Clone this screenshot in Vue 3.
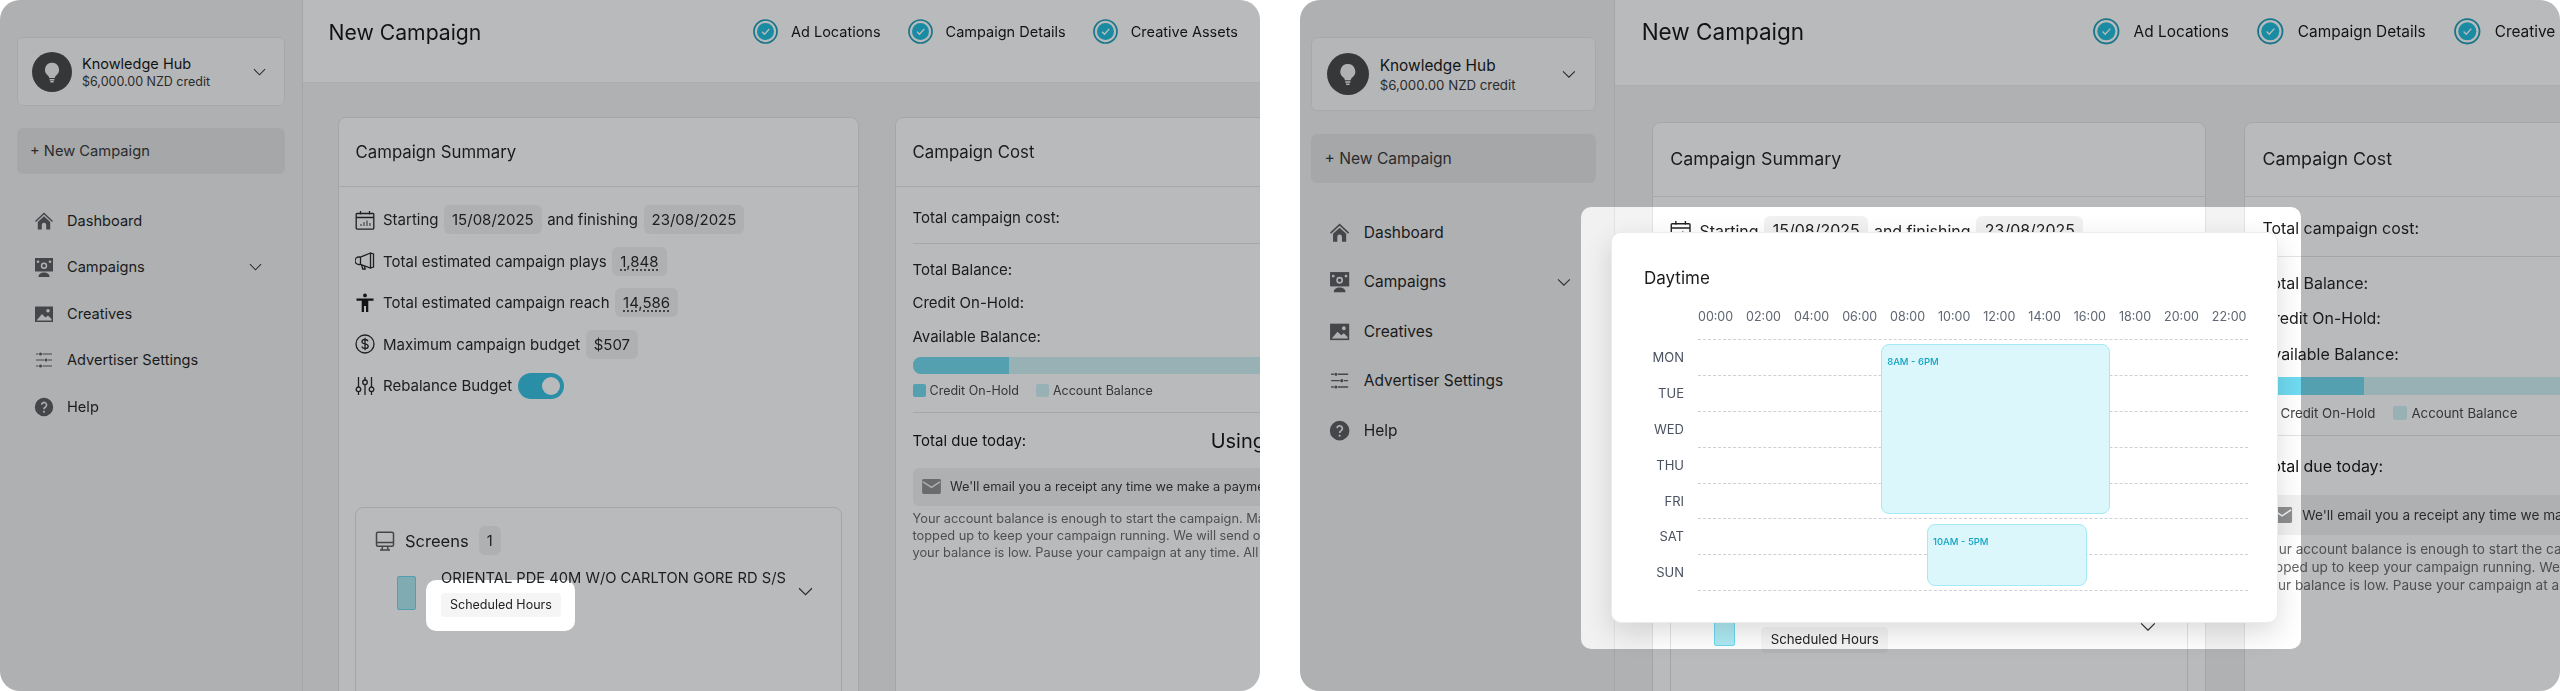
<template>
  <div class="page">
    <section v-for="shot in shots" :key="shot.name" class="shot" :class="shot.name">
      <div class="app">
        <aside class="sidebar">
          <div class="account">
            <span class="avatar">
              <svg viewBox="0 0 24 24" width="26" height="26">
                <path d="M12 3.5a6.5 6.5 0 0 0-3.6 11.9c.7.5 1 1.2 1 2.1h5.2c0-.9.3-1.6 1-2.1A6.500 6.500 0 0 0 12 3.500z" fill="#f2f2f2" />
                <path d="M9.800 19.200h4.400M10.500 21h3" stroke="#f2f2f2" stroke-width="1.300" fill="none" />
              </svg>
            </span>
            <div class="account-text">
              <div class="account-name">Knowledge Hub</div>
              <div class="account-credit">$6,000.00 NZD credit</div>
            </div>
            <svg class="chev" viewBox="0 0 14 8" width="13" height="8"><path d="M1 1l6 6 6-6" /></svg>
          </div>
          <button class="new-btn">+ New Campaign</button>
          <nav class="nav">
            <div v-for="item in nav" :key="item.label" class="nav-item">
              <svg class="icon" viewBox="0 0 20 20" width="20" height="20">
                <path v-for="(p, i) in icons[item.icon]" :key="i" :d="p.d" :class="p.k" />
              </svg>
              <span>{{ item.label }}</span>
              <svg v-if="item.open" class="chev nav-chev" viewBox="0 0 14 8" width="13" height="8"><path d="M1 1l6 6 6-6" /></svg>
            </div>
          </nav>
        </aside>

        <main class="main">
          <header class="topbar">
            <h1>New Campaign</h1>
            <div class="steps">
              <div v-for="step in steps" :key="step" class="step">
                <svg viewBox="0 0 25 25" width="25" height="25">
                  <circle cx="12.500" cy="12.500" r="11.500" class="ring" />
                  <circle cx="12.500" cy="12.500" r="8.500" class="dot" />
                  <path d="M9 12.800l2.500 2.500 4.800-5.300" class="tick" />
                </svg>
                <span>{{ step }}</span>
              </div>
            </div>
          </header>

          <div class="columns">
            <div class="card">
              <div class="card-head">Campaign Summary</div>
              <div class="summary">
                <div class="row">
                  <svg class="icon row-icon" viewBox="0 0 20 20" width="20" height="20">
                    <path v-for="(p, i) in icons.calendar" :key="i" :d="p.d" :class="p.k" />
                  </svg>
                  <span>Starting</span><span class="chip">15/08/2025</span><span>and finishing</span><span class="chip">23/08/2025</span>
                </div>
                <div class="row">
                  <svg class="icon row-icon" viewBox="0 0 20 20" width="20" height="20">
                    <path v-for="(p, i) in icons.megaphone" :key="i" :d="p.d" :class="p.k" />
                  </svg>
                  <span>Total estimated campaign plays</span><span class="chip"><u>1,848</u></span>
                </div>
                <div class="row">
                  <svg class="icon row-icon" viewBox="0 0 20 20" width="20" height="20">
                    <path v-for="(p, i) in icons.person" :key="i" :d="p.d" :class="p.k" />
                  </svg>
                  <span>Total estimated campaign reach</span><span class="chip"><u>14,586</u></span>
                </div>
                <div class="row">
                  <svg class="icon row-icon" viewBox="0 0 20 20" width="20" height="20">
                    <path v-for="(p, i) in icons.dollar" :key="i" :d="p.d" :class="p.k" />
                  </svg>
                  <span>Maximum campaign budget</span><span class="chip">$507</span>
                </div>
                <div class="row">
                  <svg class="icon row-icon" viewBox="0 0 20 20" width="20" height="20">
                    <path v-for="(p, i) in icons.tune" :key="i" :d="p.d" :class="p.k" />
                  </svg>
                  <span>Rebalance Budget</span><span class="toggle"><i></i></span>
                </div>

                <div class="screens">
                  <div class="screens-head">
                    <svg class="icon" viewBox="0 0 20 20" width="20" height="20">
                      <path v-for="(p, i) in icons.monitor" :key="i" :d="p.d" :class="p.k" />
                    </svg>
                    <span class="screens-title">Screens</span>
                    <span class="chip">1</span>
                  </div>
                  <div class="screen">
                    <span class="thumb"></span>
                    <div class="screen-text">
                      <div class="screen-name">ORIENTAL PDE 40M W/O CARLTON GORE RD S/S</div>
                      <span class="hours-chip">Scheduled Hours</span>
                    </div>
                    <svg class="chev screen-chev" viewBox="0 0 14 8" width="15" height="9"><path d="M1 1l6 6 6-6" /></svg>
                  </div>
                </div>
              </div>
            </div>

            <div class="card">
              <div class="card-head">Campaign Cost</div>
              <div class="cost">
                <div class="cost-row">Total campaign cost:</div>
                <hr class="first-rule" />
                <div class="cost-row">Total Balance:</div>
                <div class="cost-row spaced">Credit On-Hold:</div>
                <div class="cost-row spaced">Available Balance:</div>
                <div class="bar"><span class="bar-hold" style="width: 18%"></span></div>
                <div class="legend">
                  <span class="swatch hold"></span><span>Credit On-Hold</span>
                  <span class="swatch bal"></span><span>Account Balance</span>
                </div>
                <hr class="second-rule" />
                <div class="due">
                  <span>Total due today:</span>
                  <span class="using">Using account balance</span>
                </div>
                <div class="notice">
                  <svg viewBox="0 0 20 16" width="19" height="15">
                    <rect width="20" height="16" rx="1.500" fill="#8d8e90" />
                    <path d="M1 3l9 6 9-6" fill="none" stroke="#f2f2f2" stroke-width="1.500" />
                  </svg>
                  <span>We'll email you a receipt any time we make a payment from your account balance.</span>
                </div>
                <p class="fine">
                  Your account balance is enough to start the campaign. Make sure your account is<br />
                  topped up to keep your campaign running. We will send out a notification when<br />
                  your balance is low. Pause your campaign at any time. All payments are secure.
                </p>
              </div>
            </div>
          </div>
        </main>
      </div>

      <div class="spot"></div>

      <div v-if="shot.modal" class="modal">
        <h2>Daytime</h2>
        <div class="schedule">
          <div class="hours">
            <span v-for="h in hours" :key="h">{{ h }}</span>
          </div>
          <div class="days">
            <span v-for="d in days" :key="d">{{ d }}</span>
          </div>
          <div class="track">
            <div v-for="d in days" :key="d" class="track-row"></div>
            <div v-for="b in blocks" :key="b.label" class="block" :style="blockStyle(b)">{{ b.label }}</div>
          </div>
        </div>
      </div>
    </section>
  </div>
</template>

<script setup>
const shots = [
  { name: 'shot-a', modal: false },
  { name: 'shot-b', modal: true },
];

const steps = ['Ad Locations', 'Campaign Details', 'Creative Assets'];

const nav = [
  { label: 'Dashboard', icon: 'home' },
  { label: 'Campaigns', icon: 'billboard', open: true },
  { label: 'Creatives', icon: 'image' },
  { label: 'Advertiser Settings', icon: 'sliders' },
  { label: 'Help', icon: 'help' },
];

const icons = {
  home: [
    { k: 'line', d: 'M1.500 10.500 10 2.500l8.500 8' },
    { k: 'solid', d: 'M3.800 11 10 5.300l6.200 5.700v7.500h-4V14a2.200 2.200 0 0 0-4.400 0v4.500h-4z' },
  ],
  billboard: [
    { k: 'solid', d: 'M1 1h18v13.500H1z' },
    { k: 'cut', d: 'M10 5.500a3.200 3.200 0 1 1 0 6.400 3.200 3.200 0 0 1 0-6.400zM4 3.500a1.300 1.300 0 1 1 0 2.600 1.300 1.300 0 0 1 0-2.600zM16 3.500a1.300 1.300 0 1 1 0 2.600 1.300 1.300 0 0 1 0-2.600z' },
    { k: 'solid', d: 'M10 7a1.700 1.700 0 1 1 0 3.400A1.700 1.700 0 0 1 10 7z' },
    { k: 'solid', d: 'M4.500 20c0-3 2.200-4.500 5.500-4.500s5.500 1.500 5.500 4.500z' },
  ],
  image: [
    { k: 'solid', d: 'M1 2.500h18v15.500H1z' },
    { k: 'cut', d: 'M2.500 16.500 8 10l3.500 3.500 2.500-2 3.500 3.500v1.500zM14 5a1.800 1.800 0 1 1 0 3.600A1.800 1.800 0 0 1 14 5z' },
  ],
  sliders: [
    { k: 'thin', d: 'M2 4h2.500M8.500 4H18M2 10h8M14 10h4M2 16h2.500M8.500 16H18' },
    { k: 'solid', d: 'M6.500 2.500a1.500 1.500 0 1 1 0 3 1.500 1.500 0 0 1 0-3zM12 8.500a1.500 1.500 0 1 1 0 3 1.500 1.500 0 0 1 0-3zM6.500 14.500a1.500 1.500 0 1 1 0 3 1.500 1.500 0 0 1 0-3z' },
  ],
  help: [
    { k: 'solid', d: 'M10 .8a9.200 9.200 0 1 1 0 18.400A9.200 9.200 0 0 1 10 .8z' },
    { k: 'cutline', d: 'M7.600 7.600A2.500 2.500 0 1 1 11.500 10c-1 .6-1.500 1.100-1.500 2.200' },
    { k: 'cut', d: 'M10 13.800a1 1 0 1 1 0 2 1 1 0 0 1 0-2z' },
  ],
  calendar: [
    { k: 'dark', d: 'M2 3.500h16a.8.8 0 0 1 .8.8v14a.8.8 0 0 1-.8.8H2a.8.8 0 0 1-.8-.8v-14a.8.8 0 0 1 .8-.8zM1.500 7.500h17M5.500 1v3.500M14.500 1v3.500' },
    { k: 'thin', d: 'M6 16v-2M9 16v-4M12 16v-5.500M15 16v-3' },
  ],
  megaphone: [
    { k: 'dark', d: 'M15.500 2 5.500 6H3.800a2.800 2.800 0 0 0 0 7.500h1.700l10 3.500zM15.500 2l3 1v13l-3 1M5.500 6v7.500M6.500 13.800l1.200 4.200h2.500l-1-3.200' },
  ],
  person: [
    { k: 'solid2', d: 'M10 .5a1.900 1.900 0 1 1 0 3.800A1.900 1.900 0 0 1 10 .5zM1.500 5.500h17v2.300h-5.200V19h-2.300v-6H9v6H6.700V7.800H1.500z' },
  ],
  dollar: [
    { k: 'dark', d: 'M10 1a9 9 0 1 1 0 18 9 9 0 0 1 0-18z' },
    { k: 'dark', d: 'M13 7.300C12.600 6 11.400 5.500 10 5.500c-1.700 0-3 .8-3 2.200 0 3 6.200 1.500 6.200 4.500 0 1.500-1.400 2.300-3.200 2.300-1.500 0-2.800-.6-3.200-2M10 3.800v12.400' },
  ],
  tune: [
    { k: 'dark', d: 'M3.500 1v10M3.500 16v3M10 1v3M10 9v10M16.500 1v10M16.500 16v3' },
    { k: 'dark', d: 'M3.500 11a2.300 2.300 0 1 1 0 4.600 2.300 2.300 0 0 1 0-4.600zM10 4a2.300 2.300 0 1 1 0 4.600A2.300 2.300 0 0 1 10 4zM16.500 11a2.300 2.300 0 1 1 0 4.600 2.300 2.300 0 0 1 0-4.600z' },
  ],
  monitor: [
    { k: 'line', d: 'M3 1.200h14a1.500 1.500 0 0 1 1.500 1.500v11a1.500 1.500 0 0 1-1.500 1.500H3a1.500 1.500 0 0 1-1.500-1.500v-11A1.500 1.500 0 0 1 3 1.200zM1.500 11.500h17M7.500 15.500 7 18.800M12.500 15.500l.5 3.300M5 19h10' },
  ],
};

const hours = ['00:00', '02:00', '04:00', '06:00', '08:00', '10:00', '12:00', '14:00', '16:00', '18:00', '20:00', '22:00'];
const days = ['MON', 'TUE', 'WED', 'THU', 'FRI', 'SAT', 'SUN'];
const ROW_HEIGHT = 35.9;

const blocks = [
  { label: '8AM - 6PM', from: 8, to: 18, day: 0, span: 5 },
  { label: '10AM - 5PM', from: 10, to: 17, day: 5, span: 2 },
];

function blockStyle(b) {
  return {
    left: `${(b.from / 24) * 100}%`,
    width: `${((b.to - b.from) / 24) * 100}%`,
    top: `${b.day * ROW_HEIGHT + 4}px`,
    height: `${b.span * ROW_HEIGHT - 9.5}px`,
  };
}
</script>

<style>
html,
body {
  margin: 0;
  background: #fff;
}
</style>

<style scoped>
.page {
  width: 2560px;
  height: 691px;
  display: flex;
  justify-content: space-between;
  background: #fff;
  font-family: Inter, 'Liberation Sans', sans-serif;
  color: #1c1c1c;
  overflow: hidden;
}

.shot {
  position: relative;
  width: 1260px;
  height: 691px;
  border-radius: 20px;
  overflow: hidden;
  background: #f3f3f3;
  filter: blur(0.4px);
}

.app {
  display: flex;
  width: 1260px;
  height: 691px;
}

.shot-b .app {
  zoom: 1.063;
  margin: -2px 0 0 -7px;
  height: 680px;
}

.sidebar {
  flex: 0 0 268px;
  padding: 37px 17px 0;
  background: #f1f1f1;
  border-right: 1px solid #e3e3e3;
}

.account {
  display: flex;
  align-items: center;
  box-sizing: border-box;
  height: 69px;
  padding: 0 18px 0 14px;
  background: #fafafa;
  border: 1px solid #e6e6e6;
  border-radius: 6px;
}

.avatar {
  flex: none;
  display: flex;
  align-items: center;
  justify-content: center;
  width: 40px;
  height: 40px;
  border-radius: 50%;
  background: #444;
}

.account-text {
  flex: 1;
  margin-left: 10px;
  padding-top: 2px;
}

.account-name {
  font-size: 14.5px;
  line-height: 18px;
  color: #111;
}

.account-credit {
  margin-top: 1px;
  font-size: 12.5px;
  line-height: 16px;
  color: #333;
}

.chev {
  flex: none;
  fill: none;
  stroke: #333;
  stroke-width: 1.100;
}

.new-btn {
  display: block;
  width: 100%;
  height: 46px;
  margin-top: 22px;
  padding: 0 13px;
  border: 0;
  border-radius: 6px;
  background: #e4e4e5;
  font: inherit;
  font-size: 14.7px;
  text-align: left;
  color: #333;
}

.nav {
  margin-top: 23.500px;
}

.nav-item {
  display: flex;
  align-items: center;
  gap: 13px;
  height: 46.500px;
  padding-left: 17px;
  font-size: 14.6px;
  color: #1c1c1c;
}

.nav-chev {
  margin-left: auto;
  margin-right: 23px;
}

.icon {
  flex: none;
}

.solid,
.solid2 {
  fill: #5a5a5c;
}

.solid2 {
  fill: #111;
}

.line {
  fill: none;
  stroke: #5a5a5c;
  stroke-width: 1.500;
}

.thin {
  fill: none;
  stroke: #5a5a5c;
  stroke-width: 1.200;
}

.dark {
  fill: none;
  stroke: #222;
  stroke-width: 1.300;
}

.cut {
  fill: #f1f1f1;
}

.cutline {
  fill: none;
  stroke: #f1f1f1;
  stroke-width: 1.600;
}

.main {
  flex: 1;
  min-width: 0;
  background: #f3f3f3;
}

.topbar {
  display: flex;
  justify-content: space-between;
  align-items: flex-start;
  box-sizing: border-box;
  height: 83px;
  padding: 19px 22px 0 25.500px;
  background: #fff;
  border-bottom: 1px solid #ececec;
}

.topbar h1 {
  margin: 0;
  font-size: 21.2px;
  line-height: 26px;
  font-weight: 400;
  color: #111;
}

.steps {
  display: flex;
  gap: 27px;
}

.step {
  display: flex;
  align-items: center;
  gap: 13px;
  font-size: 14.5px;
  color: #111;
}

.ring {
  fill: none;
  stroke: #1a9cb8;
  stroke-width: 1.700;
}

.dot {
  fill: #1bbcdc;
}

.tick {
  fill: none;
  stroke: #fff;
  stroke-width: 1.300;
}

.columns {
  display: flex;
  gap: 36px;
  padding: 34px 0 0 35px;
  width: 1100px;
}

.card {
  flex: 0 0 521px;
  box-sizing: border-box;
  height: 700px;
  background: #fff;
  border: 1px solid #e3e3e3;
  border-radius: 8px;
}

.card-head {
  height: 68px;
  padding-left: 16.500px;
  line-height: 68px;
  font-size: 16.8px;
  color: #1c1c1c;
  border-bottom: 1px solid #e6e6e6;
}

.summary {
  padding: 18px 16px 0;
}

.row {
  display: flex;
  align-items: center;
  gap: 5.500px;
  min-height: 29px;
  margin-bottom: 12.500px;
  font-size: 15px;
  color: #222;
}

.row-icon {
  margin-right: 2.500px;
}

.chip {
  display: inline-block;
  padding: 0 8px;
  line-height: 29px;
  background: #f1f1f1;
  border-radius: 6px;
}

.chip u {
  text-decoration: underline dotted;
  text-underline-offset: 3px;
}

.toggle {
  display: flex;
  align-items: center;
  justify-content: flex-end;
  box-sizing: border-box;
  width: 46px;
  height: 26px;
  padding-right: 4px;
  background: #33c1e3;
  border-radius: 13px;
}

.toggle i {
  display: block;
  width: 18px;
  height: 18px;
  border-radius: 50%;
  background: #fff;
}

.screens {
  box-sizing: border-box;
  height: 300px;
  margin-top: 107px;
  padding: 18px 16px 0 19px;
  border: 1px solid #e3e3e3;
  border-radius: 8px;
}

.screens-head {
  display: flex;
  align-items: center;
  gap: 10px;
}

.screens-title {
  font-size: 16.5px;
}

.screens-head .chip {
  padding: 0 8px;
  font-size: 14.5px;
}

.screen {
  display: flex;
  margin-top: 14px;
  padding-left: 22px;
}

.thumb {
  flex: none;
  box-sizing: border-box;
  width: 19px;
  height: 34px;
  margin-top: 7px;
  background: #aeeaf3;
  border: 1px solid #6bd8ee;
  border-radius: 2px;
}

.screen-text {
  margin-left: 25px;
}

.screen-name {
  font-size: 14.7px;
  line-height: 18px;
  white-space: nowrap;
  color: #222;
}

.hours-chip {
  display: inline-block;
  margin-top: 5.500px;
  padding: 0 9px;
  line-height: 24px;
  font-size: 12.5px;
  background: #f5f5f5;
  border-radius: 4px;
  color: #222;
}

.screen-chev {
  margin: 18px 0 0 12px;
}

.cost {
  padding: 20px 16.500px 0;
}

.cost-row {
  line-height: 21px;
  font-size: 15px;
  color: #1c1c1c;
}

.cost-row.spaced {
  margin-top: 12.600px;
}

hr {
  margin: 0;
  border: 0;
  height: 1px;
  background: #e3e3e3;
}

.first-rule {
  margin: 14.500px 0 15px;
}

.second-rule {
  margin-top: 14px;
}

.bar {
  height: 17px;
  margin-top: 10px;
  background: #d0f2f7;
  border-radius: 8px 0 0 8px;
  overflow: hidden;
}

.bar-hold {
  display: block;
  height: 100%;
  background: #6fdaf0;
}

.legend {
  display: flex;
  align-items: center;
  height: 14px;
  margin-top: 10px;
  font-size: 12.500px;
  color: #444;
}

.swatch {
  width: 13px;
  height: 13px;
  margin-right: 4px;
  border-radius: 2px;
}

.swatch.hold {
  background: #6fdaf0;
}

.swatch.bal {
  background: #d0f2f7;
  margin-left: 17px;
}

.due {
  display: flex;
  align-items: center;
  height: 24px;
  margin-top: 16px;
  font-size: 15px;
  color: #111;
  white-space: nowrap;
}

.using {
  margin-left: 184.500px;
  font-size: 20px;
}

.notice {
  display: flex;
  align-items: center;
  gap: 9px;
  height: 38px;
  margin-top: 15px;
  padding-left: 9.500px;
  background: #f1f1f1;
  border-radius: 6px;
  font-size: 12.800px;
  color: #333;
  white-space: nowrap;
}

.fine {
  margin: 4.500px 0 0;
  font-size: 12.800px;
  line-height: 17px;
  color: #666;
  white-space: nowrap;
}

.spot {
  position: absolute;
  box-sizing: border-box;
  left: 426px;
  top: 580px;
  width: 149px;
  height: 51px;
  border-radius: 10px;
  box-shadow: 0 0 0 3000px rgba(22, 25, 31, 0.3);
}

.shot-b .spot {
  left: 281px;
  top: 207px;
  width: 720px;
  height: 442px;
}

.modal {
  position: absolute;
  box-sizing: border-box;
  left: 311px;
  top: 232px;
  width: 667px;
  height: 391px;
  padding: 33px 0 0 32px;
  background: #fff;
  border: 1px solid #ececec;
  border-radius: 10px;
  box-shadow: 0 10px 28px rgba(0, 0, 0, 0.14);
}

.modal h2 {
  margin: 0;
  font-size: 17px;
  line-height: 24px;
  font-weight: 400;
  color: #1c1c1c;
}

.schedule {
  display: grid;
  grid-template-columns: 40px 549.500px;
  column-gap: 14px;
  margin-top: 16px;
}

.hours {
  grid-column: 2;
  display: flex;
  justify-content: space-between;
  height: 33px;
  margin-right: 1px;
  font-size: 12.500px;
  line-height: 22px;
  color: #5f6672;
}

.days {
  display: flex;
  flex-direction: column;
  align-items: flex-end;
  padding-top: 1px;
}

.days span {
  height: 35.900px;
  line-height: 35.900px;
  font-size: 13px;
  color: #4a5160;
}

.track {
  position: relative;
  border-top: 1px dashed #cdd1d6;
}

.track-row {
  box-sizing: border-box;
  height: 35.900px;
  border-bottom: 1px dashed #cdd1d6;
}

.block {
  position: absolute;
  box-sizing: border-box;
  padding: 11px 0 0 5px;
  font-size: 9.500px;
  line-height: 12px;
  font-weight: 500;
  color: #0fa3c2;
  background: #dcf7fc;
  border: 1.200px solid #a2eaf6;
  border-radius: 8px;
}
</style>
